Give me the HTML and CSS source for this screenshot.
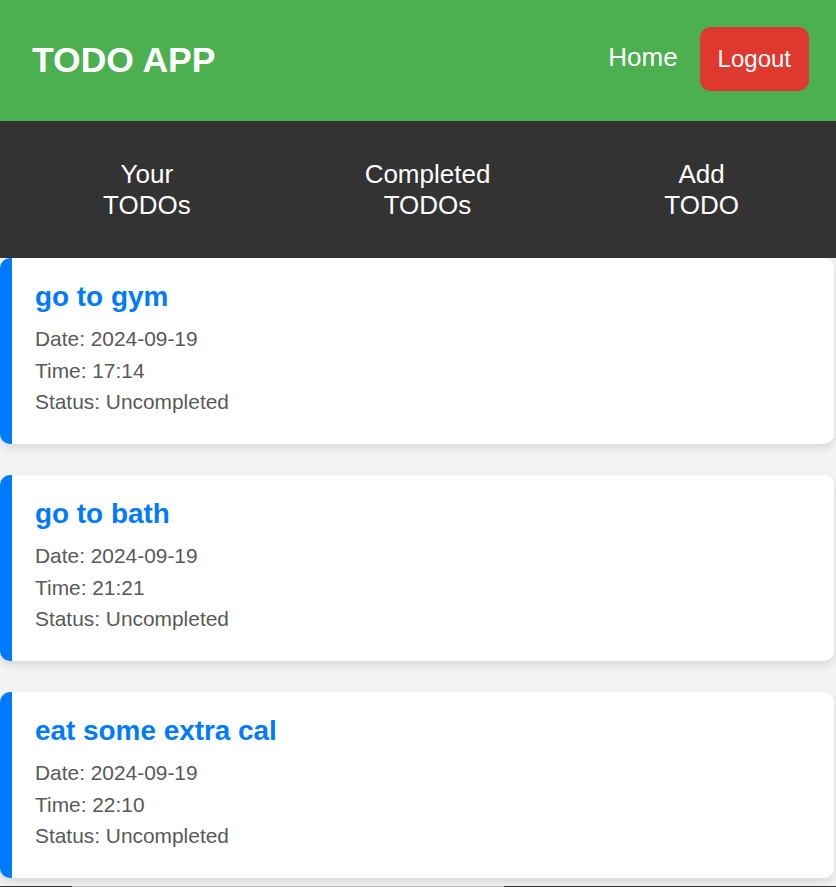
FILE: index.html
```html
<!DOCTYPE html>
<html lang="en">
<head>
<meta charset="utf-8">
<title>TODO APP</title>
<link rel="stylesheet" href="styles.css">
</head>
<body>
<header class="topbar">
  <h1 class="brand">TODO APP</h1>
  <div class="top-actions">
    <a class="home-link" href="#">Home</a>
    <button class="logout-btn">Logout</button>
  </div>
</header>
<nav class="subnav">
  <a class="subnav-item" href="#">Your TODOs</a>
  <a class="subnav-item" href="#">Completed TODOs</a>
  <a class="subnav-item" href="#">Add TODO</a>
</nav>
<main class="todo-list">
  <section class="todo-card">
    <h3 class="todo-title">go to gym</h3>
    <p class="todo-meta">Date: 2024-09-19</p>
    <p class="todo-meta">Time: 17:14</p>
    <p class="todo-meta">Status: Uncompleted</p>
  </section>
  <section class="todo-card">
    <h3 class="todo-title">go to bath</h3>
    <p class="todo-meta">Date: 2024-09-19</p>
    <p class="todo-meta">Time: 21:21</p>
    <p class="todo-meta">Status: Uncompleted</p>
  </section>
  <section class="todo-card">
    <h3 class="todo-title">eat some extra cal</h3>
    <p class="todo-meta">Date: 2024-09-19</p>
    <p class="todo-meta">Time: 22:10</p>
    <p class="todo-meta">Status: Uncompleted</p>
  </section>
</main>
<footer class="footer">
  <div class="footer-left"></div>
  <div class="footer-mid"></div>
  <div class="footer-right"></div>
</footer>
</body>
</html>
```
FILE: styles.css
```css
* { box-sizing: border-box; }

html, body {
  margin: 0;
  padding: 0;
}

body {
  background: #f4f4f4;
  font-family: "Liberation Sans", Arial, sans-serif;
  overflow: hidden;
}

.topbar {
  background: #4caf50;
  height: 121px;
  display: flex;
  align-items: center;
  justify-content: space-between;
  padding: 0 27px 0 32px;
}

.brand {
  margin: 0;
  color: #fff;
  font-size: 35.5px;
  font-weight: bold;
}

.top-actions {
  display: flex;
  align-items: center;
  gap: 22px;
  margin-top: -4px;
}

.home-link {
  color: #fff;
  text-decoration: none;
  font-size: 26px;
  margin-top: -2px;
}

.logout-btn {
  background: #df382e;
  color: #fff;
  border: none;
  border-radius: 11px;
  font-family: "Liberation Sans", Arial, sans-serif;
  font-size: 24px;
  padding: 18px 18px;
  line-height: 28px;
}

.subnav {
  background: #333;
  height: 137px;
  display: flex;
  align-items: center;
  justify-content: space-between;
  padding: 0 97px 0 103px;
}

.subnav-item {
  color: #fff;
  text-decoration: none;
  font-size: 26px;
  line-height: 31px;
  width: min-content;
  text-align: center;
}

.todo-list {
  display: flex;
  flex-direction: column;
  gap: 31px;
  padding-bottom: 8px;
}

.todo-card {
  background: #fff;
  border-left: 12px solid #007bff;
  border-radius: 10px;
  box-shadow: 0 4px 10px rgba(0, 0, 0, 0.12);
  padding: 23px 23px 24px 23px;
  height: 186px;
  margin-right: 2px;
}

.todo-title {
  margin: 0 0 10px 0;
  color: #007bff;
  font-size: 27.9px;
  line-height: 32px;
  font-weight: bold;
}

.todo-meta {
  margin: 0;
  color: #595959;
  font-size: 20.9px;
  line-height: 31.6px;
}

.footer {
  display: flex;
  height: 40px;
  background: #333;
}

.footer-left { width: 72px; }
.footer-mid { width: 432px; background: #bbb; }
.footer-right { flex: 1; }
```
